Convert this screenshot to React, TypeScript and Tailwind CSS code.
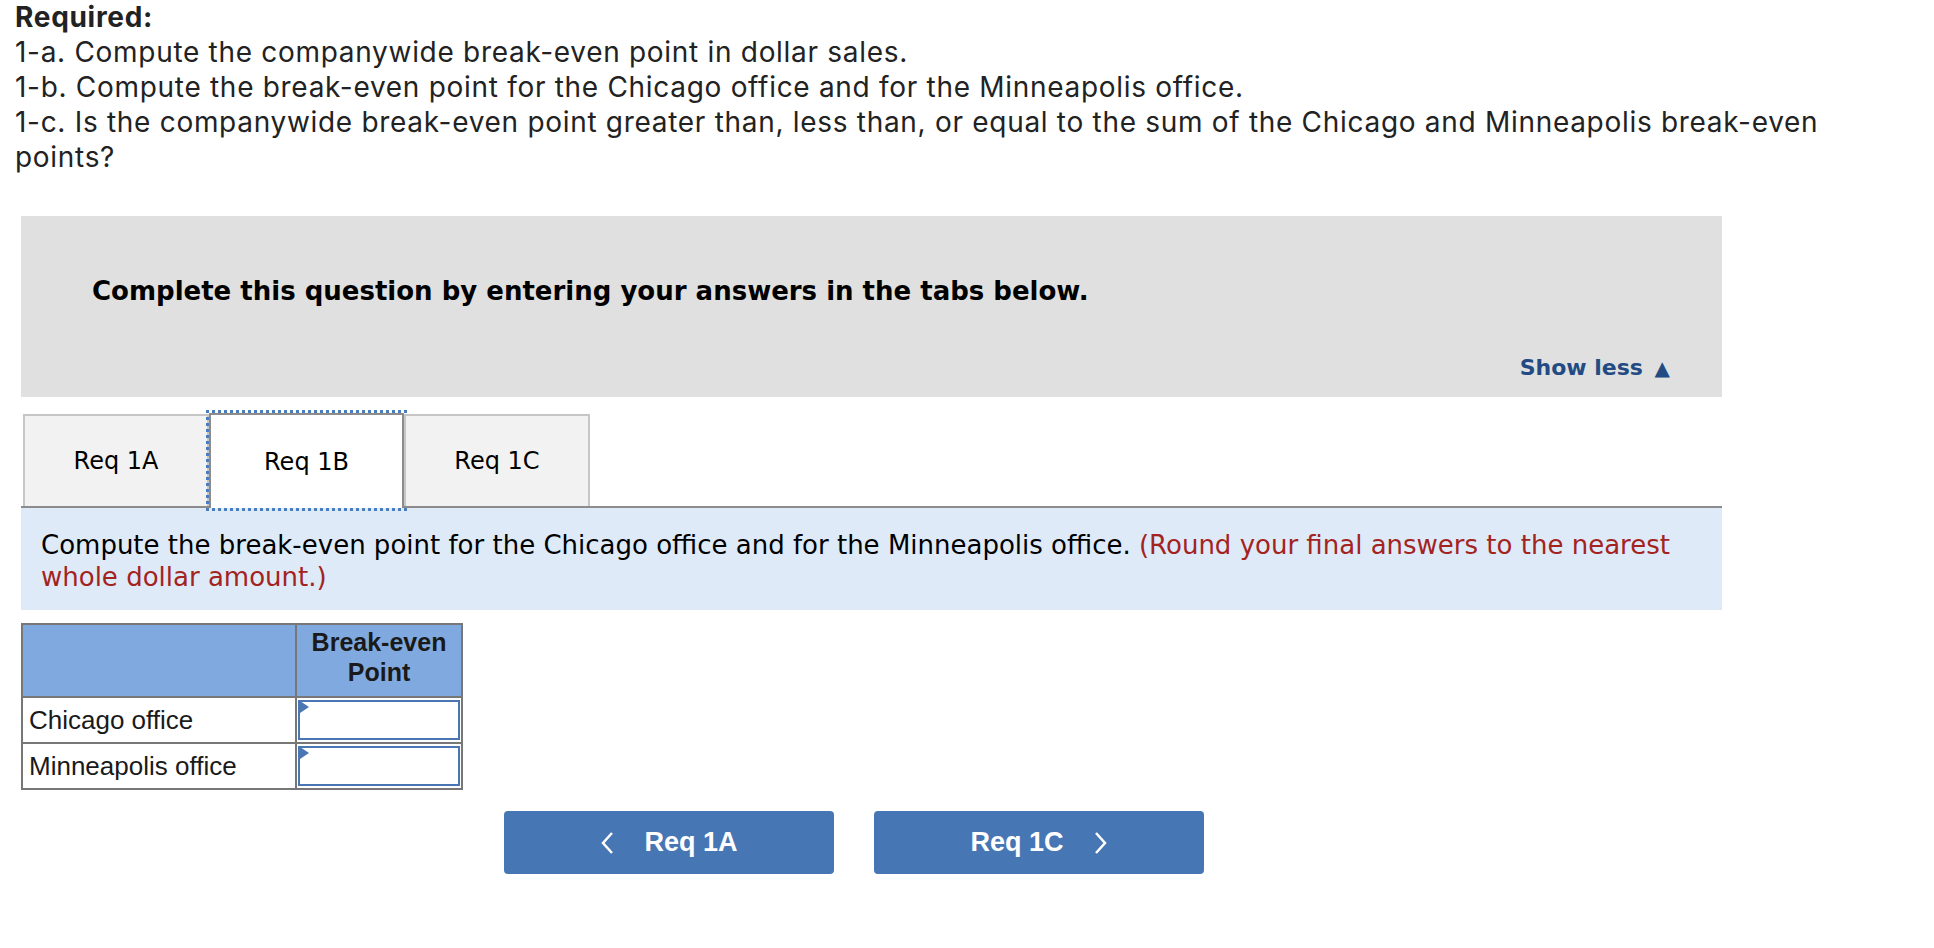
import { useState } from "react";

const tabs = ["Req 1A", "Req 1B", "Req 1C"];

export default function App() {
  const [active, setActive] = useState(1);
  const [values, setValues] = useState({ chicago: "", minneapolis: "" });

  return (
    <div className="min-h-screen bg-white text-[#1a1a1a]">
      {/* requirement list */}
      <div className="w-[1870px] pl-[15px] font-['Inter',sans-serif] text-[28px] leading-[35px] tracking-[0.7px] text-[#222]">
        <div className="font-bold">Required:</div>
        <div>1-a. Compute the companywide break-even point in dollar sales.</div>
        <div>1-b. Compute the break-even point for the Chicago office and for the Minneapolis office.</div>
        <div>
          1-c. Is the companywide break-even point greater than, less than, or equal to the sum of the Chicago and
          Minneapolis break-even points?
        </div>
      </div>

      <div className="ml-[21px] mt-[41px] w-[1701px]">
        {/* instructions panel */}
        <div className="flex h-[181px] flex-col justify-between bg-[#e0e0e0] pb-[13px] pl-[71px] pr-[52px] pt-[56px]">
          <div className="font-['DejaVu_Sans',sans-serif] text-[26px] font-bold text-black">
            Complete this question by entering your answers in the tabs below.
          </div>
          <button className="self-end font-['DejaVu_Sans',sans-serif] text-[22px] font-bold text-[#224a83]">
            Show less <span className="ml-[4px] text-[20px]">▲</span>
          </button>
        </div>

        {/* tabs */}
        <div className="mt-[16px] flex items-end border-b-2 border-[#8c8c8c] pl-[2px]">
          {tabs.map((t, i) =>
            i === active ? (
              <button
                key={t}
                onClick={() => setActive(i)}
                className="-mb-[2px] h-[95px] w-[195px] border-2 border-b-0 border-[#8c8c8c] bg-white font-['DejaVu_Sans',sans-serif] text-[24px] text-black outline-[3px] outline-dotted outline-[#4a7cc0]"
              >
                {t}
              </button>
            ) : (
              <button
                key={t}
                onClick={() => setActive(i)}
                className="h-[92px] w-[186px] border-2 border-b-0 border-[#c6c6c6] bg-[#f2f2f2] font-['DejaVu_Sans',sans-serif] text-[24px] text-black"
              >
                {t}
              </button>
            )
          )}
        </div>

        <div className="bg-[#deeaf7] px-[20px] pb-[17px] pt-[21px] font-['DejaVu_Sans',sans-serif] text-[26px] leading-[32px] text-black">
          Compute the break-even point for the Chicago office and for the Minneapolis office.{" "}
          <span className="text-[#a3231f]">(Round your final answers to the nearest whole dollar amount.)</span>
        </div>

        {/* answer table */}
        <table className="mt-[13px] border-collapse font-['Liberation_Sans',Arial,sans-serif] text-[26px] text-[#1a1a1a]">
          <thead>
            <tr className="h-[73px] bg-[#80aadf]">
              <th className="w-[274px] border-2 border-[#777]"></th>
              <th className="w-[166px] border-2 border-[#777] pt-[2px] align-top text-[25px] font-bold leading-[30px]">
                Break-even
                <br />
                Point
              </th>
            </tr>
          </thead>
          <tbody>
            {[
              ["Chicago office", "chicago"],
              ["Minneapolis office", "minneapolis"],
            ].map(([label, key]) => (
              <tr key={key} className="h-[46px]">
                <td className="border-2 border-[#777] pl-[6px]">{label}</td>
                <td className="relative border-2 border-[#777] p-[1px]">
                  <input
                    className="block h-[40px] w-full border-2 border-[#4a77b4] bg-white px-2 outline-none"
                    value={values[key as "chicago" | "minneapolis"]}
                    onChange={(e) => setValues({ ...values, [key]: e.target.value })}
                  />
                  <span className="absolute left-[3px] top-[3px] h-0 w-0 border-y-[6px] border-l-[9px] border-y-transparent border-l-[#4a77b4]" />
                </td>
              </tr>
            ))}
          </tbody>
        </table>

        {/* prev / next */}
        <div className="ml-[483px] mt-[21px] flex gap-[40px] font-['Liberation_Sans',Arial,sans-serif] text-[27px] font-bold text-white">
          <button className="flex h-[63px] w-[330px] items-center justify-center gap-[30px] rounded-[4px] bg-[#4776b4]">
            <svg width="14" height="24" viewBox="0 0 14 24" fill="none" stroke="white" strokeWidth="2.5">
              <path d="M12 2 L3 12 L12 22" />
            </svg>
            <span>Req 1A</span>
          </button>
          <button className="flex h-[63px] w-[330px] items-center justify-center gap-[30px] rounded-[4px] bg-[#4776b4]">
            <span>Req 1C</span>
            <svg width="14" height="24" viewBox="0 0 14 24" fill="none" stroke="white" strokeWidth="2.5">
              <path d="M2 2 L11 12 L2 22" />
            </svg>
          </button>
        </div>
      </div>
    </div>
  );
}
